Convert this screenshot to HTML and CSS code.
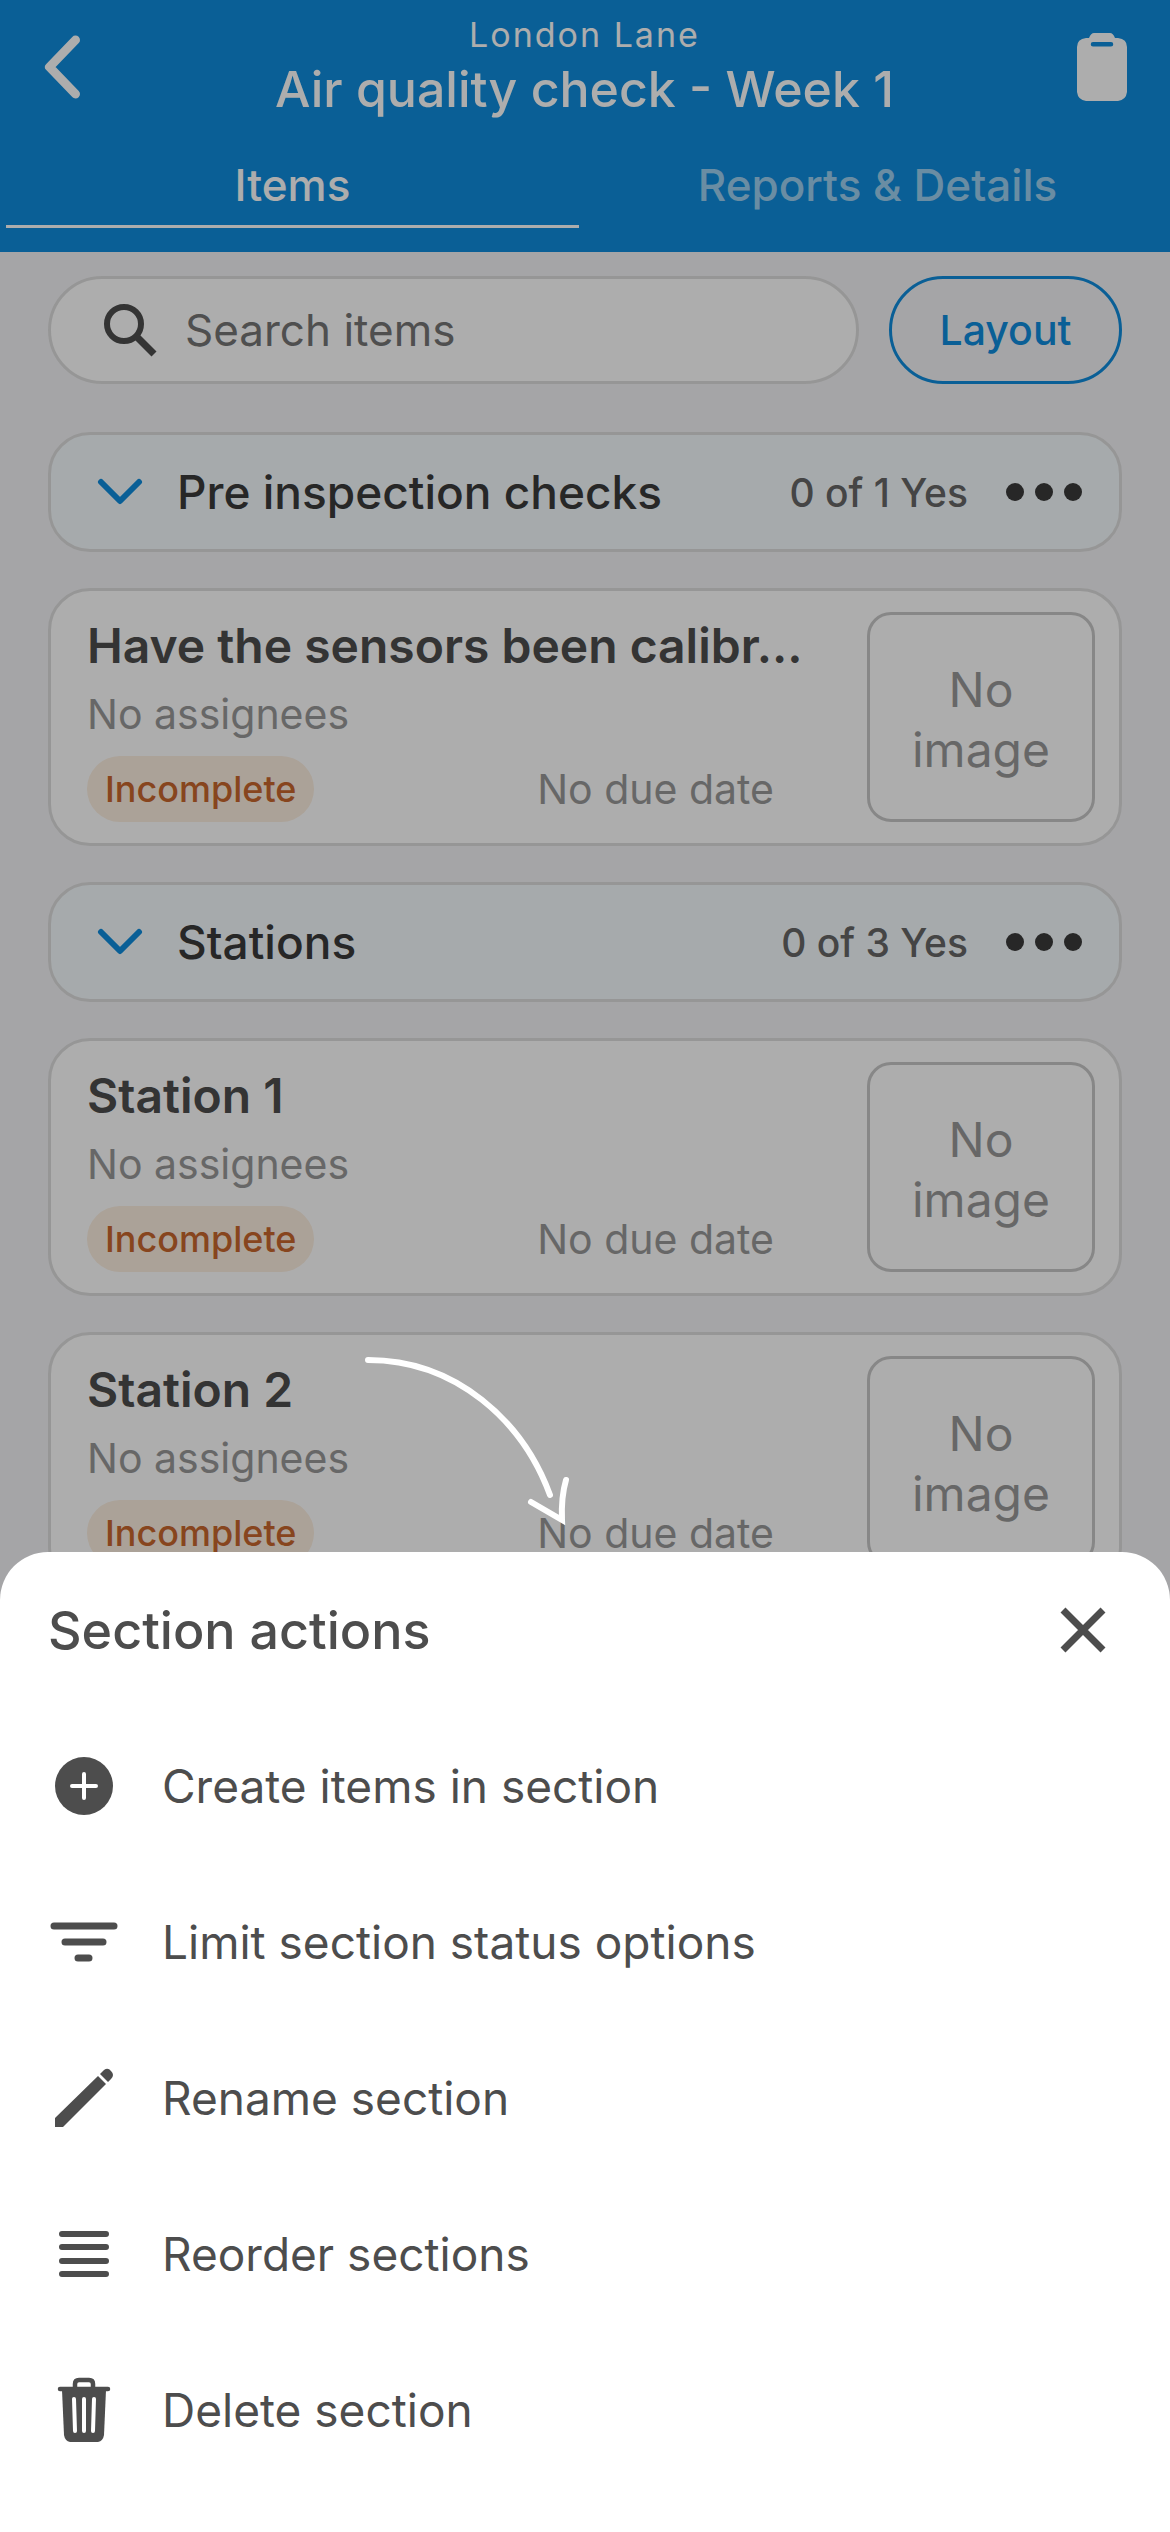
FILE: index.html
```html
<!DOCTYPE html>
<html lang="en">
<head>
    <meta charset="UTF-8">
    <meta name="viewport" content="width=device-width, initial-scale=1.0">
    <title>Air quality check - Week 1</title>
    <link rel="stylesheet" href="styles.css">
</head>
<body>
    <header class="header">
        <div class="title-bar">
            <button class="icon-btn" aria-label="Back">
                <svg width="40" height="72" viewBox="0 0 40 72" fill="none" stroke="currentColor" stroke-width="9" stroke-linecap="round" stroke-linejoin="round"><path d="M33.500 9L7.500 36l26 27"/></svg>
            </button>
            <div class="titles">
                <p class="site">London Lane</p>
                <h1>Air quality check - Week 1</h1>
            </div>
            <button class="icon-btn" aria-label="Clipboard">
                <svg width="50" height="68" viewBox="0 0 50 68" fill="currentColor" fill-rule="evenodd"><path d="M17 0H33Q36 0 38 5H41Q50 6 50 14V59Q49 67 41 68H9Q1 67 0 59V14Q0 6 9 5H12Q14 0 17 0ZM16 9a2 2 0 0 0 0 4.500H34a2 2 0 0 0 0-4.500Z"/></svg>
            </button>
        </div>
        <nav class="tabs">
            <a href="#items" class="tab active">Items</a>
            <a href="#reports" class="tab">Reports &amp; Details</a>
        </nav>
    </header>

    <main class="content" id="items">
        <div class="search-row">
            <label class="search">
                <svg width="54" height="54" viewBox="0 0 54 54" fill="none" stroke="currentColor" stroke-width="6"><circle cx="21" cy="21" r="17"/><path d="M33 33l18 18" stroke-width="7"/></svg>
                <input type="text" placeholder="Search items" aria-label="Search items">
            </label>
            <button class="layout-btn">Layout</button>
        </div>

        <section class="section">
            <div class="section-head">
                <svg class="chevron" width="46" height="28" viewBox="0 0 46 28"><path d="M4 4l19 19L42 4"/></svg>
                <h2>Pre inspection checks</h2>
                <span class="count">0 of 1 Yes</span>
                <button class="more" aria-label="Section actions"><i></i><i></i><i></i></button>
            </div>
            <article class="card">
                <div class="card-text">
                    <h3>Have the sensors been calibr...</h3>
                    <p>No assignees</p>
                    <div class="card-foot"><span class="badge">Incomplete</span><span class="due">No due date</span></div>
                </div>
                <div class="no-image">No image</div>
            </article>
        </section>

        <section class="section">
            <div class="section-head">
                <svg class="chevron" width="46" height="28" viewBox="0 0 46 28"><path d="M4 4l19 19L42 4"/></svg>
                <h2>Stations</h2>
                <span class="count">0 of 3 Yes</span>
                <button class="more" aria-label="Section actions"><i></i><i></i><i></i></button>
            </div>
            <article class="card">
                <div class="card-text">
                    <h3>Station 1</h3>
                    <p>No assignees</p>
                    <div class="card-foot"><span class="badge">Incomplete</span><span class="due">No due date</span></div>
                </div>
                <div class="no-image">No image</div>
            </article>
            <article class="card">
                <div class="card-text">
                    <h3>Station 2</h3>
                    <p>No assignees</p>
                    <div class="card-foot"><span class="badge">Incomplete</span><span class="due">No due date</span></div>
                </div>
                <div class="no-image">No image</div>
            </article>
        </section>
    </main>

    <div class="overlay"></div>

    <div class="sheet" role="dialog" aria-labelledby="sheetTitle">
        <!-- arrow pointing down at the sheet -->
        <svg class="arrow" width="212" height="172" viewBox="0 0 212 172" fill="none" stroke="#fff" stroke-width="6" stroke-linecap="round"><path d="M6 6C94 6 161 67 188 141"/><path d="M169 148L200 166Q199 143 204 126"/></svg>
        <div class="sheet-head">
            <h2 id="sheetTitle">Section actions</h2>
            <button class="close" aria-label="Close">
                <svg width="46" height="46" viewBox="0 0 46 46" stroke="currentColor" stroke-width="7"><path d="M3 3l40 40M43 3L3 43"/></svg>
            </button>
        </div>
        <ul class="actions">
            <li><button>
                <svg width="68" height="68" viewBox="0 0 68 68"><circle cx="34" cy="34" r="29" fill="currentColor"/><path d="M34 22v24M22 34h24" stroke="#fff" stroke-width="4" stroke-linecap="round"/></svg>
                Create items in section
            </button></li>
            <li><button>
                <svg width="68" height="68" viewBox="0 0 68 68" stroke="currentColor" stroke-width="7" stroke-linecap="round"><path d="M4 18h60M15 34h38M28 50h11"/></svg>
                Limit section status options
            </button></li>
            <li><button>
                <svg width="68" height="68" viewBox="0 0 68 68" fill="currentColor"><path d="M5 63V54L48 12L56 20L13 63ZM50 10L54 6Q58 3 61 7Q65 11 61 15L58 18Z"/></svg>
                Rename section
            </button></li>
            <li><button>
                <svg width="68" height="68" viewBox="0 0 68 68" stroke="currentColor" stroke-width="6" stroke-linecap="round"><path d="M12 14h44M12 27h44M12 41h44M12 54h44"/></svg>
                Reorder sections
            </button></li>
            <li><button>
                <svg width="68" height="68" viewBox="0 0 68 68" fill="none" stroke="currentColor"><path d="M25 12V8Q25 4 29 4H39Q43 4 43 8V12M10 13H58" stroke-width="4.500" stroke-linecap="round"/><path d="M12 14H56L54 59Q53 65 48 66H20Q15 65 14 59Z" fill="currentColor" stroke="none"/><path d="M24 23L25 55M34 23V55M44 23L43 55" stroke="#fff" stroke-width="4" stroke-linecap="round"/></svg>
                Delete section
            </button></li>
        </ul>
    </div>
</body>
</html>
```

FILE: styles.css
```css
* { box-sizing: border-box; margin: 0; padding: 0; }
html, body { height: 100%; }
body { font-family: Inter, "Liberation Sans", sans-serif; background: #f4f4f7; color: #4d4d4d; overflow: hidden; position: relative; }
button { font: inherit; color: inherit; background: none; border: none; }
svg { display: block; flex: none; }

.header { background: #0f8ddd; color: #fff; height: 252px; }
.title-bar { display: flex; align-items: center; justify-content: space-between; height: 134px; padding: 0 43px 0 42px; }
.icon-btn { width: 50px; }
.titles { text-align: center; }
.site { font-size: 34px; line-height: 44px; letter-spacing: 2px; }
h1 { font-size: 50px; line-height: 64px; font-weight: 500; }
.tabs { display: flex; height: 94px; }
.tab { flex: 1; margin: 0 6px; font-size: 44px; line-height: 102px; font-weight: 500; text-align: center; text-decoration: none; color: rgba(255, 255, 255, 0.6); }
.tab.active { color: #fff; border-bottom: 3px solid #fff; }

.content { padding: 24px 48px; }
.search-row { display: flex; gap: 30px; margin-bottom: 48px; }
.search { flex: 1; min-width: 0; display: flex; align-items: center; gap: 28px; height: 108px; padding: 0 52px; background: #fff; border: 3px solid #dedede; border-radius: 54px; }
.search input { flex: 1; min-width: 0; font: inherit; font-size: 44px; border: none; outline: none; background: none; }
.search input::placeholder { color: #757575; opacity: 1; }
.layout-btn { flex: none; width: 233px; height: 108px; font-size: 41px; font-weight: 500; color: #0f8ddd; border: 3px solid #0f8ddd; border-radius: 54px; }

.section-head { display: flex; align-items: center; height: 120px; margin-bottom: 36px; padding: 0 37px 0 46px; background: #f5fbfe; border: 3px solid #dedede; border-radius: 42px; }
.chevron { fill: none; stroke: #0f8ddd; stroke-width: 6; stroke-linecap: round; stroke-linejoin: round; }
.section-head h2 { flex: 1; margin-left: 34px; font-size: 46px; font-weight: 500; color: #3a3a3a; }
.count { font-size: 39px; font-weight: 500; color: #666; }
.more { display: flex; gap: 11px; margin-left: 38px; }
.more i { width: 18px; height: 18px; border-radius: 50%; background: #3a3a3a; }

.card { display: flex; justify-content: space-between; height: 258px; margin-bottom: 36px; padding: 21px 24px 21px 36px; background: #fff; border: 3px solid #dedede; border-radius: 42px; }
.card-text { width: 730px; }
.card h3 { font-size: 48px; line-height: 68px; font-weight: 600; color: #4d4d4d; white-space: nowrap; }
.card p { font-size: 41px; line-height: 68px; color: #999; }
.card-foot { display: flex; align-items: center; justify-content: space-between; margin-top: 8px; padding-right: 43px; }
.badge { padding: 0 18px; font-size: 36px; line-height: 66px; font-weight: 500; color: #c8662d; background: #fdefe0; border-radius: 33px; }
.due { font-size: 41px; color: #999; }
.no-image { width: 228px; height: 210px; padding: 45px 30px; font-size: 48px; line-height: 60px; text-align: center; color: #999; border: 3px solid #c8c8c8; border-radius: 24px; }

.overlay { position: absolute; inset: 0; background: rgba(0, 0, 0, 0.32); }
.sheet { position: absolute; left: 0; right: 0; bottom: 0; padding-bottom: 44px; background: #fff; border-radius: 48px 48px 0 0; }
.arrow { position: absolute; left: 362px; top: -198px; }
.sheet-head { display: flex; align-items: center; justify-content: space-between; height: 156px; padding: 0 64px 0 48px; }
.sheet-head h2 { font-size: 52px; font-weight: 500; }
.actions { list-style: none; }
.actions button { display: flex; align-items: center; gap: 44px; width: 100%; height: 156px; padding: 0 50px; font-size: 46px; text-align: left; }
```
